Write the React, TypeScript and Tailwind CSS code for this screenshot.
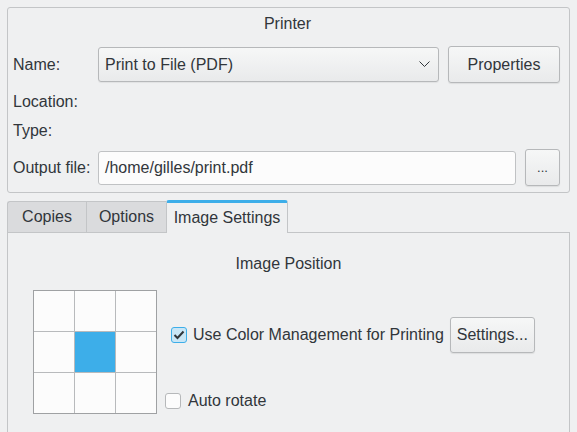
import React from "react";

const btn =
  "flex items-center justify-center rounded-[3px] border border-[#b6b8ba] bg-gradient-to-b from-[#f6f7f7] to-[#e9eaeb] shadow-[0_1px_1px_rgba(0,0,0,0.08)]";

export default function App() {
  return (
    <div className="w-[577px] h-[432px] overflow-hidden bg-[#eff0f1] p-[7px] font-['Liberation_Sans',Arial,sans-serif] text-[16px] leading-[18px] text-[#31363b]">
      {/* Printer group */}
      <div className="flex h-[186px] flex-col rounded-[3px] border border-[#c3c5c7] pl-[5px] pr-[7px] pt-[7px]">
        <div className="h-[18px] text-center">Printer</div>
        <div className="mt-[13px] flex h-[37px] items-center">
          <div className="w-[85px]">Name:</div>
          <div className="flex h-[35px] w-[341px] items-center justify-between rounded-[3px] border border-[#b6b8ba] bg-gradient-to-b from-[#f6f7f7] to-[#e9eaeb] pl-[6px] pr-[8px] shadow-[0_1px_1px_rgba(0,0,0,0.06)]">
            <span>Print to File (PDF)</span>
            <svg width="11" height="7" viewBox="0 0 11 7">
              <polyline points="0.5,0.5 5.5,5.5 10.5,0.5" fill="none" stroke="#31363b" strokeWidth="1" />
            </svg>
          </div>
          <div className={`${btn} ml-[9px] h-[37px] w-[112px]`}>Properties</div>
        </div>
        <div className="mt-[10px] h-[18px]">Location:</div>
        <div className="mt-[11px] h-[18px]">Type:</div>
        <div className="mt-[9px] flex h-[37px] items-center">
          <div className="w-[85px]">Output file:</div>
          <div className="flex h-[34px] w-[418px] items-center rounded-[3px] border border-[#c0c2c4] bg-[#fcfcfc] pl-[6px]">
            /home/gilles/print.pdf
          </div>
          <div className={`${btn} ml-[9px] h-[37px] w-[35px] text-[13px]`}>...</div>
        </div>
      </div>

      {/* Tabs */}
      <div className="mt-[8px] flex h-[32px] items-stretch">
        <div className="flex w-[79px] items-center justify-center rounded-tl-[3px] border-l border-t border-b border-[#c3c5c7] bg-[#dadbdd]">
          Copies
        </div>
        <div className="flex w-[80px] items-center justify-center border-l border-t border-b border-[#c3c5c7] bg-[#dadbdd]">
          Options
        </div>
        <div className="-mt-[1px] flex w-[122px] items-center justify-center rounded-t-[3px] border-x border-t-[3px] border-x-[#c3c5c7] border-t-[#3daee9] bg-[#eff0f1] pb-[1px]">
          Image Settings
        </div>
        <div className="flex-1 border-b border-[#c3c5c7]" />
      </div>

      {/* Panel */}
      <div className="h-[210px] border-x border-[#c3c5c7] bg-[#eff0f1]">
        <div className="pt-[22px] text-center">Image Position</div>
        <div className="mt-[17px] flex pl-[25px]">
          <div className="grid h-[124px] w-[124px] grid-cols-3 gap-px border border-[#9fa1a3] bg-[#b8babc]">
            {Array.from({ length: 9 }).map((_, i) => (
              <div key={i} className={i === 4 ? "bg-[#3daee9]" : "bg-[#fcfcfc]"} />
            ))}
          </div>
          <div className="flex flex-col">
            <div className="mt-[27px] flex h-[36px] items-center pl-[14px]">
              <div className="flex h-[16px] w-[16px] items-center justify-center rounded-[3px] border border-[#3daee9] bg-[#c9e6f6]">
                <svg width="12" height="10" viewBox="0 0 12 10">
                  <polyline points="1.5,5 4.5,8 10.5,1.5" fill="none" stroke="#31363b" strokeWidth="2" />
                </svg>
              </div>
              <span className="ml-[6px]">Use Color Management for Printing</span>
              <div className={`${btn} ml-[6px] h-[36px] w-[85px]`}>Settings...</div>
            </div>
            <div className="mt-[39px] flex h-[18px] items-center pl-[8px]">
              <div className="h-[16px] w-[16px] rounded-[3px] border border-[#b6b8ba] bg-[#fcfcfc]" />
              <span className="ml-[7px]">Auto rotate</span>
            </div>
          </div>
        </div>
      </div>
    </div>
  );
}
